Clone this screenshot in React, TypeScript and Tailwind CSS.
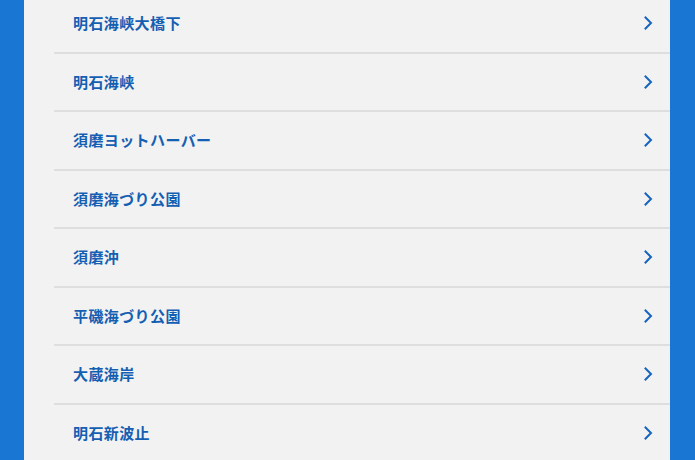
import React from "react";

const items = [
  "明石海峡大橋下",
  "明石海峡",
  "須磨ヨットハーバー",
  "須磨海づり公園",
  "須磨沖",
  "平磯海づり公園",
  "大蔵海岸",
  "明石新波止",
];

function Chevron() {
  return (
    <svg width="10" height="14" viewBox="0 0 10 14" className="shrink-0">
      <path d="M2.5 1.5 L8 7 L2.5 12.5" fill="none" stroke="#1565c0" strokeWidth="2" strokeLinecap="square" strokeLinejoin="miter" />
    </svg>
  );
}

export default function App() {
  return (
    <div className="w-[695px] h-[460px] overflow-hidden bg-[#1976d2] flex">
      <div className="ml-[24px] w-[646px] h-full bg-[#f2f2f2] overflow-hidden">
        <div className="-mt-[5px] pl-[30px]">
          {items.map((t, i) => (
            <div
              key={i}
              className="h-[58.5px] border-b-2 border-[#dedede] flex items-center justify-between pl-[19px] pr-[17px]"
            >
              <span
                className="text-[15px] tracking-[0.4px] font-bold text-[#155fb2]"
                style={{ fontFamily: '"Noto Sans CJK JP", "Noto Sans", sans-serif' }}
              >
                {t}
              </span>
              <Chevron />
            </div>
          ))}
        </div>
      </div>
    </div>
  );
}
